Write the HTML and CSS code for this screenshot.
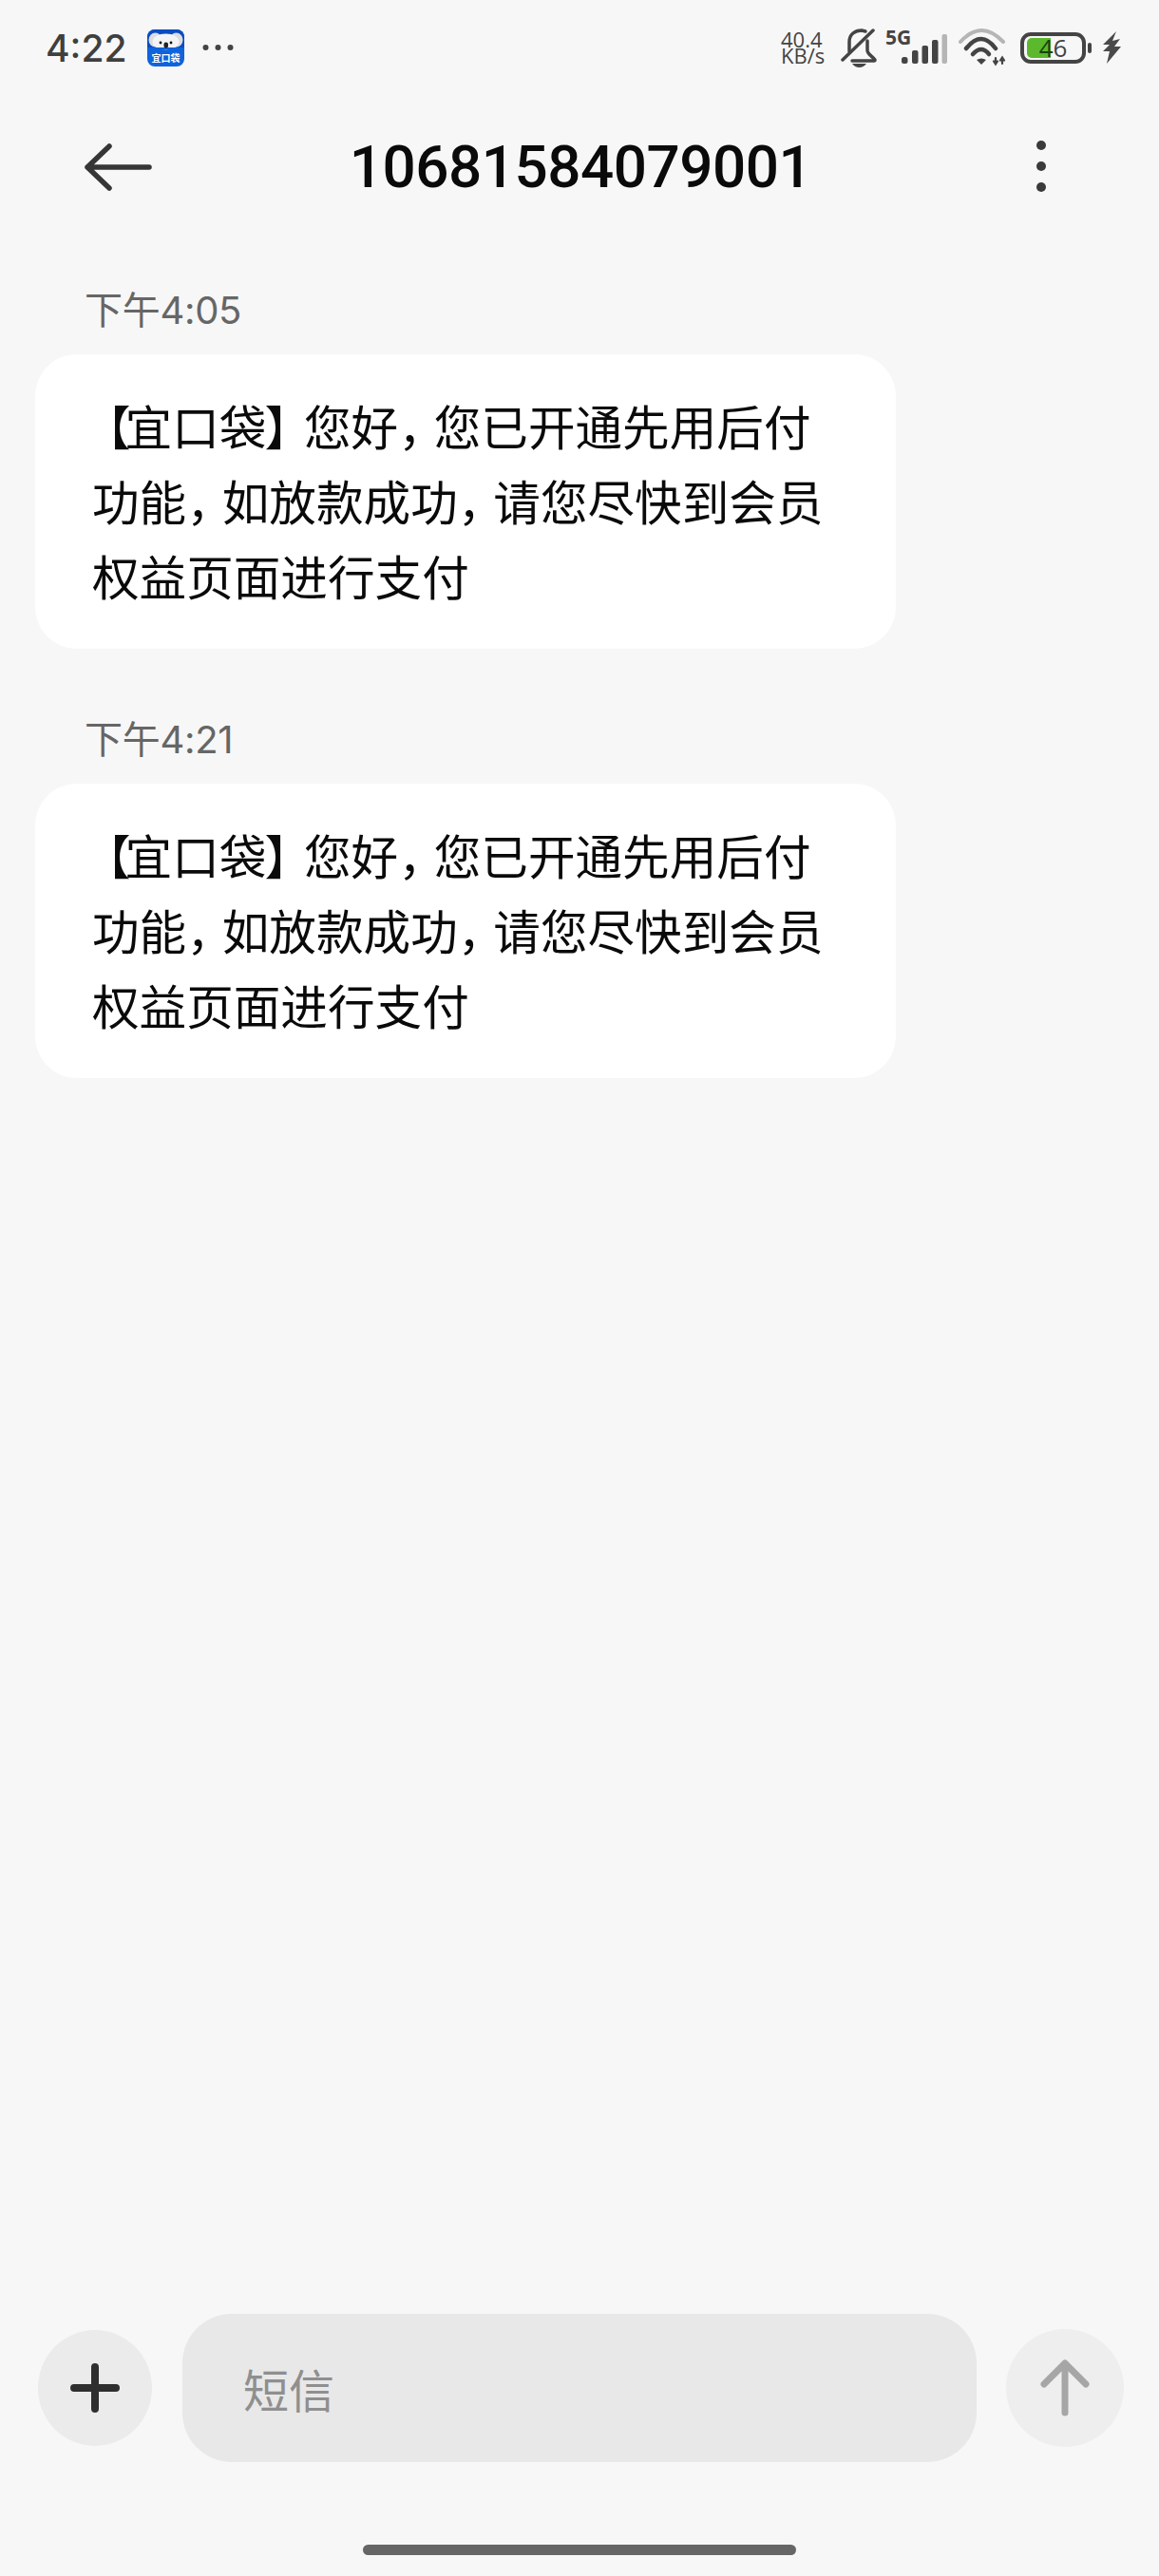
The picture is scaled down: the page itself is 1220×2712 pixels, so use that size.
FILE: index.html
```html
<!DOCTYPE html>
<html lang="zh-CN">
<head>
<meta charset="utf-8">
<title>10681584079001</title>
<link rel="stylesheet" href="styles.css">
</head>
<body>
<div class="screen">
  <div class="status">
    <div class="status-left">
      <span class="clock">4:22</span>
      <svg class="app-icon" viewBox="0 0 39 39" width="39" height="39">
        <rect width="39" height="39" rx="8" fill="#0f63dc"/>
        <path d="M0 8a8 8 0 0 1 8-8h23a8 8 0 0 1 8 8v11H0z" fill="#0b4cc0"/>
        <ellipse cx="8.500" cy="11" rx="7" ry="7.500" fill="#dcdce2"/>
        <ellipse cx="30.500" cy="11" rx="7" ry="7.500" fill="#dcdce2"/>
        <ellipse cx="19.500" cy="13" rx="14" ry="8.500" fill="#f4f4f6"/>
        <rect x="3" y="19" width="33" height="2.500" fill="#0f63dc"/>
        <circle cx="14" cy="14" r="1.400" fill="#111"/>
        <circle cx="25" cy="14" r="1.400" fill="#111"/>
        <rect x="17.500" y="13.500" width="4.500" height="6" rx="2" fill="#222"/>
        <text class="app-text" x="19.500" y="33.500" text-anchor="middle">宜口袋</text>
      </svg>
      <svg class="more" viewBox="0 0 33 8" width="33" height="8">
        <circle cx="3.500" cy="4" r="3" fill="#444"/>
        <circle cx="16.500" cy="4" r="3" fill="#444"/>
        <circle cx="29.500" cy="4" r="3" fill="#444"/>
      </svg>
    </div>
    <div class="status-right">
      <div class="speed"><span>40.4</span><span>KB/s</span></div>
      <svg class="bell" viewBox="0 0 38 44" width="38" height="44" fill="none" stroke="#444" stroke-width="3.500" stroke-linecap="round" stroke-linejoin="round">
        <path d="M2 34 34 3"/>
        <path d="M9 25V15C9 7 15 3 22 3l4 1"/>
        <path d="M28 14v10c0 4 5 6 8 10 0 1 0 1-1 1H12"/>
        <path d="M12 38h15q-3 4-7.500 4T12 38z" fill="#444" stroke="none"/>
      </svg>
      <svg class="signal" viewBox="0 -8 66 48" width="66" height="48">
        <text class="five-g" x="0" y="17">5G</text>
        <rect x="17" y="30" width="6.500" height="7" rx="2.500" fill="#444"/>
        <rect x="28" y="23" width="6.500" height="14" rx="2" fill="#444"/>
        <rect x="38.500" y="18" width="6.500" height="19" rx="2" fill="#444"/>
        <rect x="49" y="12" width="6.500" height="25" rx="2" fill="#444"/>
        <rect x="59.500" y="6" width="5.500" height="31" rx="2" fill="#b5b5b5"/>
      </svg>
      <svg class="wifi" viewBox="0 0 52 42" width="52" height="42" fill="none" stroke-linecap="round">
        <path d="M3 15Q25-9 48 15" stroke="#b5b5b5" stroke-width="4"/>
        <path d="M9 22Q25 2 40 22" stroke="#444" stroke-width="4.500"/>
        <path d="M16 28Q25 18 33 28" stroke="#444" stroke-width="4.500"/>
        <path d="M20 34q5-3 10 0l-5 5z" fill="#444"/>
        <path d="M40 32v6M38 35.500l2 3 2-3" stroke="#444" stroke-width="2.200"/>
        <path d="M47 38v-6M45 34.500l2-3 2 3" stroke="#444" stroke-width="2.200"/>
      </svg>
      <div class="battery">
        <div class="battery-body">
          <div class="battery-fill"></div>
          <span class="battery-num"><span class="battery-dark">4</span>6</span>
        </div>
        <div class="battery-tip"></div>
      </div>
      <svg class="bolt" viewBox="0 0 20 34" width="20" height="34">
        <path d="M15 0 1 14h7l-7 7h7L5 34l15-18h-7l6-8-8 2z" fill="#4a4a4a"/>
      </svg>
    </div>
  </div>

  <header class="header">
    <svg class="back" viewBox="0 0 72 52" width="72" height="52" fill="none" stroke="#363636" stroke-width="5.500" stroke-linecap="round" stroke-linejoin="round">
      <path d="M69 26H4M27 4 4 26l23 22"/>
    </svg>
    <h1 class="title">10681584079001</h1>
    <svg class="kebab" viewBox="0 0 12 56" width="12" height="56">
      <circle cx="6" cy="6" r="5" fill="#3a3a3a"/>
      <circle cx="6" cy="28" r="5" fill="#3a3a3a"/>
      <circle cx="6" cy="50" r="5" fill="#3a3a3a"/>
    </svg>
  </header>

  <main class="messages">
    <div class="stamp">下午4:05</div>
    <div class="bubble">
      <span class="line"><span class="open">【</span>宜口袋<span class="close">】</span>您好<span class="comma">，</span>您已开通先用后付</span>
      <span class="line">功能<span class="comma">，</span>如放款成功<span class="comma">，</span>请您尽快到会员</span>
      <span class="line">权益页面进行支付</span>
    </div>
    <div class="stamp stamp-next">下午4:21</div>
    <div class="bubble">
      <span class="line"><span class="open">【</span>宜口袋<span class="close">】</span>您好<span class="comma">，</span>您已开通先用后付</span>
      <span class="line">功能<span class="comma">，</span>如放款成功<span class="comma">，</span>请您尽快到会员</span>
      <span class="line">权益页面进行支付</span>
    </div>
  </main>

  <footer class="footer">
    <div class="composer">
      <div class="round plus">
        <svg viewBox="0 0 52 52" width="52" height="52" stroke="#2f2f2f" stroke-width="8" stroke-linecap="round">
          <path d="M26 4v44M4 26h44"/>
        </svg>
      </div>
      <div class="field">短信</div>
      <div class="round send">
        <svg viewBox="0 0 52 60" width="52" height="60" fill="none" stroke="#a6a6a6" stroke-width="7" stroke-linecap="round" stroke-linejoin="round">
          <path d="M26 56V4M4 26 26 4l22 22"/>
        </svg>
      </div>
    </div>
    <div class="home-bar"></div>
  </footer>
</div>
</body>
</html>
```

FILE: styles.css
```css
* { box-sizing: border-box; }
html, body { margin: 0; padding: 0; }
body { background: #f7f7f7; }

.screen {
  width: 1220px;
  height: 2712px;
  display: flex;
  flex-direction: column;
  overflow: hidden;
  background: #f7f7f7;
  font-family: "Noto Sans CJK SC", "Noto Sans", sans-serif;
}

/* status bar */
.status {
  height: 100px;
  flex: none;
  display: flex;
  align-items: center;
  justify-content: space-between;
  padding: 0 40px 0 48px;
}
.status-left { display: flex; align-items: center; }
.clock {
  font-family: Inter, Roboto, sans-serif;
  font-weight: 500;
  font-size: 39px;
  line-height: 50px;
  color: #3f3f3f;
  width: 107px;
  margin-top: 2px;
}
.app-icon { display: block; }
.app-text {
  font-family: "Noto Sans CJK SC", sans-serif;
  font-size: 10px;
  font-weight: 700;
  fill: #fff;
}
.more { display: block; margin-left: 19px; }

.status-right { display: flex; align-items: center; }
.speed {
  display: flex;
  flex-direction: column;
  font-family: "Open Sans", sans-serif;
  font-size: 22px;
  line-height: 17px;
  color: #444;
  width: 63px;
  align-items: flex-start;
}
.bell { display: block; margin-top: 1px; }
.signal { display: block; margin: 0 0 8px 9px; }
.five-g {
  font-family: "Open Sans", sans-serif;
  font-weight: 700;
  font-size: 21px;
  fill: #444;
}
.wifi { display: block; margin-left: 10px; }
.battery { display: flex; align-items: center; margin-left: 14px; }
.battery-body {
  position: relative;
  width: 69px;
  height: 33px;
  border: 4px solid #444;
  border-radius: 11px;
  display: flex;
  align-items: center;
  justify-content: center;
}
.battery-fill {
  position: absolute;
  left: 3px;
  top: 2px;
  width: 25px;
  height: 21px;
  background: #5cb82c;
  border-radius: 5px 0 0 5px;
}
.battery-num {
  position: relative;
  font-family: "Open Sans", sans-serif;
  font-size: 26px;
  line-height: 25px;
  color: #444;
}
.battery-dark { color: #16450c; }
.battery-tip {
  width: 4px;
  height: 11px;
  margin-left: 2px;
  background: #444;
  border-radius: 2px;
}
.bolt { display: block; margin-left: 11px; }

/* header */
.header {
  height: 150px;
  flex: none;
  display: grid;
  grid-template-columns: 1fr auto 1fr;
  align-items: center;
  padding: 2px 118px 0 120px;
}
.back { display: block; margin-left: -32px; }
.title {
  margin: 0;
  font-family: Roboto, sans-serif;
  font-weight: 500;
  font-size: 62px;
  letter-spacing: -0.5px;
  line-height: 80px;
  color: #0a0a0a;
}
.kebab { display: block; justify-self: end; margin-top: -2px; }

/* messages */
.messages {
  flex: 1;
  padding: 52px 277px 0 37px;
}
.stamp {
  font-family: Inter, "Noto Sans CJK SC", sans-serif;
  font-size: 40px;
  letter-spacing: -0.3px;
  line-height: 50px;
  color: #666;
  padding-left: 52px;
  margin-bottom: 21px;
}
.stamp-next { margin-top: 71px; }
.bubble {
  background: #fff;
  border-radius: 44px;
  padding: 35px 60px 38px;
  font-size: 49.600px;
  line-height: 79px;
  color: #0a0a0a;
}
.line { display: block; white-space: nowrap; }
.open { letter-spacing: -6px; margin-left: -9px; }
.close { letter-spacing: -8px; margin-left: -2px; }
.comma { letter-spacing: -12px; }

/* footer */
.footer { flex: none; }
.composer {
  display: flex;
  align-items: center;
  padding: 0 37px 0 40px;
}
.round {
  flex: none;
  border-radius: 50%;
  display: flex;
  align-items: center;
  justify-content: center;
}
.plus { width: 120px; height: 122px; background: #ebebeb; }
.send { width: 124px; height: 124px; background: #eeeeee; }
.field {
  flex: 1;
  height: 156px;
  margin: 0 31px 0 32px;
  padding-left: 64px;
  background: #e8e8e8;
  border-radius: 52px;
  display: flex;
  align-items: center;
  font-size: 48px;
  color: #8f8f8f;
}
.home-bar {
  width: 456px;
  height: 11px;
  margin: 87px auto 22px;
  background: #666;
  border-radius: 6px;
}
```
